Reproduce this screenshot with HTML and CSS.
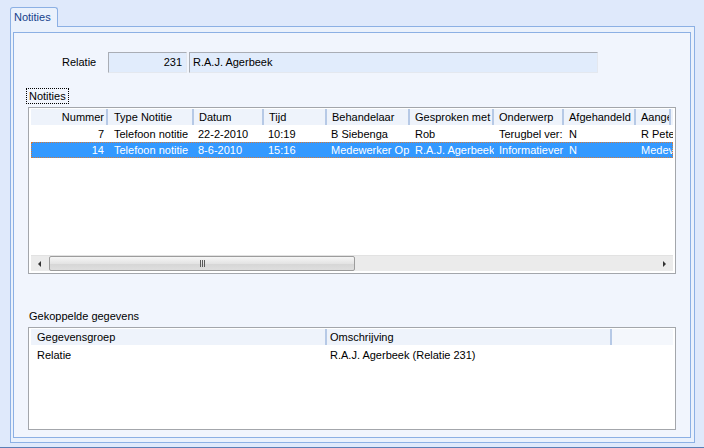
FILE: index.html
```html
<!DOCTYPE html>
<html lang="nl">
<head>
<meta charset="utf-8">
<title>Notities</title>
<link rel="stylesheet" href="styles.css">
</head>
<body>
<div class="window">
  <div class="tabs"><div class="tab">Notities</div></div>
  <div class="panel">
    <div class="inner">
      <div class="relatie-row">
        <span class="label">Relatie</span>
        <div class="field field-num">231</div>
        <div class="field field-name">R.A.J. Agerbeek</div>
      </div>
      <div class="group-label">Notities</div>
      <div class="listview lv-notes">
        <div class="lv-header">
          <div class="hc c1 right">Nummer</div>
          <div class="hc c2">Type Notitie</div>
          <div class="hc c3">Datum</div>
          <div class="hc c4">Tijd</div>
          <div class="hc c5">Behandelaar</div>
          <div class="hc c6">Gesproken met</div>
          <div class="hc c7">Onderwerp</div>
          <div class="hc c8">Afgehandeld</div>
          <div class="hc c9">Aange</div>
        </div>
        <div class="lv-rows">
          <div class="lv-row">
            <div class="rc c1 right">7</div>
            <div class="rc c2">Telefoon notitie</div>
            <div class="rc c3">22-2-2010</div>
            <div class="rc c4">10:19</div>
            <div class="rc c5">B Siebenga</div>
            <div class="rc c6">Rob</div>
            <div class="rc c7">Terugbel ver:</div>
            <div class="rc c8">N</div>
            <div class="rc c9">R Pete</div>
          </div>
          <div class="lv-row selected">
            <div class="rc c1 right">14</div>
            <div class="rc c2">Telefoon notitie</div>
            <div class="rc c3">8-6-2010</div>
            <div class="rc c4">15:16</div>
            <div class="rc c5">Medewerker Op</div>
            <div class="rc c6">R.A.J. Agerbeek</div>
            <div class="rc c7">Informatiever</div>
            <div class="rc c8">N</div>
            <div class="rc c9">Medev</div>
          </div>
        </div>
        <div class="hscroll">
          <div class="sb-btn"><span class="arrow-left"></span></div>
          <div class="sb-thumb">
            <svg width="7" height="7" viewBox="0 0 7 7"><path d="M1.5 0v7M3.5 0v7M5.5 0v7" stroke="#5a5a5a" stroke-width="1"/></svg>
          </div>
          <div class="sb-track"></div>
          <div class="sb-btn"><span class="arrow-right"></span></div>
        </div>
      </div>
      <div class="section-label">Gekoppelde gegevens</div>
      <div class="listview lv-links">
        <div class="lv-header">
          <div class="hc d1">Gegevensgroep</div>
          <div class="hc d2">Omschrijving</div>
          <div class="hc d3"></div>
        </div>
        <div class="lv-rows">
          <div class="lv-row">
            <div class="rc d1">Relatie</div>
            <div class="rc d2">R.A.J. Agerbeek (Relatie 231)</div>
          </div>
        </div>
      </div>
    </div>
  </div>
  <div class="bottom-line"></div>
</div>
</body>
</html>
```

FILE: styles.css
```css
* { box-sizing: border-box; }

html, body {
  margin: 0;
  padding: 0;
}

body {
  width: 704px;
  height: 448px;
  overflow: hidden;
  background: #dfe9fb;
  font-family: "Liberation Sans", Arial, sans-serif;
  font-size: 11px;
  color: #000;
}

.window {
  display: flex;
  flex-direction: column;
  height: 448px;
}

.tabs {
  display: flex;
  padding: 7px 0 0 10px;
}

.tab {
  position: relative;
  z-index: 1;
  width: 48px;
  height: 20px;
  margin-bottom: -1px;
  padding-left: 3px;
  border: 1px solid #8cb0e4;
  border-bottom: none;
  border-radius: 3px 3px 0 0;
  background: #eaf1fc;
  color: #15428b;
  line-height: 18px;
}

.panel {
  margin-left: 10px;
  width: 685px;
  height: 417px;
  border: 1px solid #8cb0e4;
  background: #eaf1fc;
  padding: 5px 3px 4px 2px;
  display: flex;
}

.inner {
  flex: 1;
  border: 1px solid #8cb0e4;
  background: #f1f5fd;
  display: flex;
  flex-direction: column;
  align-items: flex-start;
}

.bottom-line {
  margin-top: 4px;
  height: 1px;
  background: #5b7fb6;
}

/* Relatie row */
.relatie-row {
  display: flex;
  margin-top: 19px;
  padding-left: 48px;
  height: 21px;
}

.label {
  width: 46px;
  line-height: 21px;
}

.field {
  height: 21px;
  line-height: 19px;
  background: #e1ecfc;
  border: 1px solid;
  border-color: #a9adb5 #e4e8ef #e4e8ef #a9adb5;
  white-space: nowrap;
  overflow: hidden;
}

.field-num {
  width: 79px;
  text-align: right;
  padding-right: 4px;
}

.field-name {
  width: 409px;
  margin-left: 2px;
  padding-left: 3px;
}

/* Group label */
.group-label {
  margin-top: 15px;
  margin-left: 12px;
  height: 16px;
  line-height: 14px;
  padding: 0 2px;
  border: 1px dotted #000;
}

/* List views */
.listview {
  margin-left: 14px;
  width: 648px;
  border: 1px solid #a3a6ab;
  background: #fff;
  padding: 1px 2px 2px 2px;
  display: flex;
  flex-direction: column;
  overflow: hidden;
}

.lv-notes {
  margin-top: 3px;
  height: 167px;
}

.lv-links {
  margin-top: 4px;
  height: 103px;
}

.lv-header {
  display: flex;
  height: 16px;
  background: #eef3fb;
  white-space: nowrap;
  overflow: hidden;
}

.hc {
  flex: none;
  line-height: 16px;
  padding-left: 5px;
  border-right: 2px solid #b6c9e6;
  overflow: hidden;
  white-space: nowrap;
}

.lv-rows {
  display: flex;
  flex-direction: column;
  flex: 1;
  margin-top: 1px;
}

.lv-links .lv-rows { margin-top: 2px; }

.lv-row {
  display: flex;
  height: 16px;
  overflow: hidden;
  white-space: nowrap;
}

.lv-row.selected {
  background: #3399ff;
  color: #fff;
  outline: 1px dotted #d07a3c;
  outline-offset: -1px;
}

.rc {
  flex: none;
  line-height: 16px;
  padding-left: 4px;
  overflow: hidden;
  white-space: nowrap;
}

.right { text-align: right; }

.c1 { width: 77px; }
.c2 { width: 86px; padding-left: 6px; }
.c3 { width: 70px; }
.c4 { width: 63px; }
.c5 { width: 83px; }
.c6 { width: 84px; padding-left: 5px; }
.c7 { width: 70px; padding-left: 5px; }
.c8 { width: 72px; padding-left: 5px; }
.c9 { width: 37px; padding-left: 5px; }
.hc.c9 { width: 35px; }

.hc.c1 { padding-left: 0; padding-right: 2px; }
.rc.c1 { padding-left: 0; padding-right: 4px; }

.d1 { width: 296px; padding-left: 6px; }
.d2 { width: 285px; padding-left: 3px; }
.hc.d3 { flex: 1; border-right: none; background: #f4f7fc; }

/* Horizontal scrollbar */
.hscroll {
  display: flex;
  height: 16px;
  background: #ebebeb;
  border-top: 1px solid #e2e2e2;
}

.sb-btn {
  width: 17px;
  display: flex;
  align-items: center;
  justify-content: center;
  flex: none;
}

.arrow-left {
  width: 0;
  height: 0;
  border-style: solid;
  border-width: 3.5px 3px 3.5px 0;
  border-color: transparent #333 transparent transparent;
}

.arrow-right {
  width: 0;
  height: 0;
  border-style: solid;
  border-width: 3.5px 0 3.5px 3px;
  border-color: transparent transparent transparent #333;
}

.sb-thumb {
  width: 306px;
  flex: none;
  margin: 0 0 0 1px;
  border: 1px solid #9c9c9c;
  border-radius: 2px;
  background: linear-gradient(#f6f6f6, #e4e4e4 50%, #d6d6d6 51%, #dedede);
  display: flex;
  align-items: center;
  justify-content: center;
}

.sb-track { flex: 1; }

/* Section label */
.section-label {
  margin-top: 36px;
  padding-left: 15px;
  line-height: 13px;
  height: 13px;
}
```
